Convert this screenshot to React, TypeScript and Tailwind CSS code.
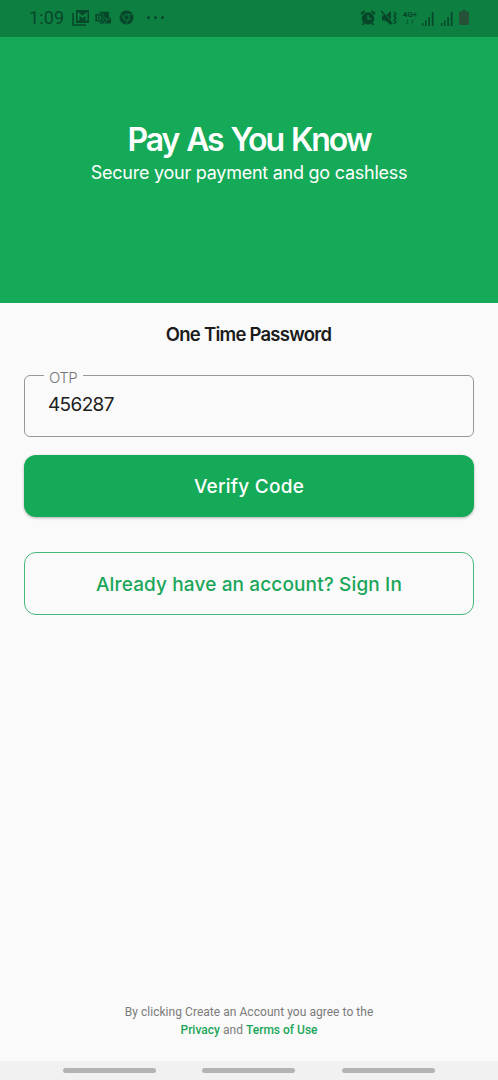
import React from "react";

function GalleryMailIcon() {
  return (
    <svg width="18" height="16" viewBox="0 0 18 16" fill="none">
      <path d="M1 3v12h13" stroke="currentColor" strokeWidth="1.6" />
      <path fillRule="evenodd" fill="currentColor" d="M4 0h13v13H4zM5.500 2.500v8h2V5.800l3 2.500 3-2.500v4.700h2v-8h-1.200l-3.800 3.200-3.800-3.200z" />
    </svg>
  );
}

function OutlookIcon() {
  return (
    <svg width="16" height="14" viewBox="0 0 16 14" fill="none">
      <path d="M5 .8h9v5l2 1v5.700H4.500V.8z" fill="currentColor" />
      <path d="M9 6.400l3 2.400 3.500-2.400M9 12l2.500-2" stroke="#0d7f41" strokeWidth="1" />
      <rect y="2.800" width="8" height="8" rx=".6" fill="currentColor" stroke="#0d7f41" strokeWidth=".7" />
      <circle cx="4" cy="6.800" r="1.800" stroke="#0d7f41" strokeWidth="1.100" />
    </svg>
  );
}

function ChromeIcon() {
  return (
    <svg width="15" height="15" viewBox="0 0 15 15" fill="none">
      <circle cx="7.500" cy="7.500" r="7" fill="currentColor" />
      <circle cx="7.500" cy="7.500" r="2.900" stroke="#0d7f41" strokeWidth="1" />
      <path d="M7.500 4.600h6M5 9L2 4M10 9l-3 5.300" stroke="#0d7f41" strokeWidth=".8" />
    </svg>
  );
}

function AlarmIcon() {
  return (
    <svg width="16" height="16" viewBox="0 0 16 16" fill="none">
      <path d="M1 4l3.500-3M15 4l-3.500-3M4 13l-1.500 2M12 13l1.500 2" stroke="currentColor" strokeWidth="2" />
      <circle cx="8" cy="8.400" r="6.200" fill="currentColor" />
      <path d="M8 5v3.700h3" stroke="#0d7f41" strokeWidth="1.400" />
    </svg>
  );
}

function MutedIcon() {
  return (
    <svg width="16" height="16" viewBox="0 0 16 16" fill="none">
      <path d="M1 5.500h3L10 1v14L4 10.500H1z" fill="currentColor" />
      <path d="M1 .5l11 12" stroke="#0d7f41" strokeWidth="1" />
      <path d="M.3 1l11 13" stroke="currentColor" strokeWidth="1.500" />
      <path d="M13 2l2 2-2 2 2 2-2 2 2 2-2 2" stroke="currentColor" strokeWidth="1.500" />
    </svg>
  );
}

function SignalIcon() {
  return (
    <svg width="14" height="14" viewBox="0 0 14 14" fill="currentColor">
      <path d="M1 11h1.400v3H1zM4 8.500h1.500V14H4zM7.300 5h1.600v9H7.300zM10.800 0h1.700v14h-1.700z" />
    </svg>
  );
}

function StatusBar() {
  return (
    <div className="flex h-[37px] shrink-0 items-start justify-between bg-[#0d7f41] pr-[29px] pl-[29px] text-[#07472a]">
      <div className="flex h-[35px] items-center">
        <span className="w-[43px] font-[Roboto] text-[18px] tracking-[0.1px]">1:09</span>
        <GalleryMailIcon />
        <span className="ml-[5px]"><OutlookIcon /></span>
        <span className="ml-[8px]"><ChromeIcon /></span>
        <span className="ml-[13px] flex gap-[4px]">
          <i className="size-[3px] rounded-full bg-current" />
          <i className="size-[3px] rounded-full bg-current" />
          <i className="size-[3px] rounded-full bg-current" />
        </span>
      </div>
      <div className="flex h-[35px] items-center">
        <AlarmIcon />
        <span className="ml-[5px]"><MutedIcon /></span>
        <div className="ml-[5px] flex w-[16px] flex-col items-center">
          <span className="font-[Roboto] text-[8px] leading-[8px] font-bold">4G+</span>
          <svg width="10" height="6" viewBox="0 0 10 6" fill="none" stroke="currentColor" strokeWidth=".9" opacity=".55">
            <path d="M2.500 0v5M1 3.500L2.500 5 4 3.500M7.500 6V1M6 2.500L7.500 1 9 2.500" />
          </svg>
        </div>
        <span className="mt-[3px] ml-[3px]"><SignalIcon /></span>
        <span className="mt-[3px] ml-[5px]"><SignalIcon /></span>
        <svg className="ml-[5px] text-[#255238]" width="10" height="15" viewBox="0 0 10 15" fill="currentColor">
          <path d="M3 0h4v1.500h2q1 0 1 1V14q0 1-1 1H1q-1 0-1-1V2.500q0-1 1-1h2z" />
        </svg>
      </div>
    </div>
  );
}

export default function App() {
  return (
    <div className="flex h-[1080px] w-[498px] flex-col overflow-hidden bg-[#fafafa] font-[Inter,sans-serif]">
      <StatusBar />
      <header className="flex h-[266px] shrink-0 flex-col items-center bg-[#14aa57] pt-[83px] whitespace-nowrap text-white">
        <h1 className="text-[32px] leading-[40px] font-semibold tracking-[-2.1px] [word-spacing:2px]">Pay As You Know</h1>
        <p className="text-[18px] leading-[26px] tracking-[-0.25px]">Secure your payment and go cashless</p>
      </header>
      <main className="flex flex-col px-[24px] pt-[18px]">
        <h2 className="pr-px text-center text-[18.5px] leading-[26px] font-semibold tracking-[-0.75px] text-[#1b1b1b]">One Time Password</h2>
        <fieldset className="mt-[17px] h-[73px] rounded-[6px] border border-[#979797] pl-[19px]">
          <legend className="h-[22px] pt-[5px] pr-[6px] pl-[5px] text-[15px] leading-[18px] font-light tracking-[-0.6px] text-[#777777]">OTP</legend>
          <input
            className="mt-[6px] block w-[300px] bg-transparent pl-[4px] text-[19px] leading-[26px] tracking-[-0.65px] text-[#202020] outline-none"
            defaultValue="456287"
            aria-label="OTP"
          />
        </fieldset>
        <button className="mt-[18px] h-[62px] rounded-[12px] bg-[#14aa57] pt-[2px] text-[19px] font-medium tracking-[0.25px] text-white shadow-[0_1px_3px_rgba(0,0,0,0.3)]">
          Verify Code
        </button>
        <button className="mt-[35px] h-[63px] rounded-[12px] border border-[#45b87a] pt-[3px] text-[19px] font-medium tracking-[0.13px] text-[#1aa659]">
          Already have an account? Sign In
        </button>
      </main>
      <footer className="mt-auto flex flex-col">
        <p className="mb-[22px] text-center font-[Roboto] text-[12px] leading-[18px] tracking-[0.04px] text-[#7b7b7b]">
          By clicking Create an Account you agree to the
          <br />
          <a className="font-medium tracking-[0px] text-[#1aa659]">Privacy</a> and <a className="font-medium tracking-[0px] text-[#1aa659]">Terms of Use</a>
        </p>
        <nav className="flex h-[19px] bg-[#f1f1f1] pt-[7px] pl-[63px]">
          <span className="h-[5px] w-[93px] rounded-full bg-[#b4b4b4]" />
          <span className="ml-[46px] h-[5px] w-[93px] rounded-full bg-[#b4b4b4]" />
          <span className="ml-[47px] h-[5px] w-[93px] rounded-full bg-[#b4b4b4]" />
        </nav>
      </footer>
    </div>
  );
}
